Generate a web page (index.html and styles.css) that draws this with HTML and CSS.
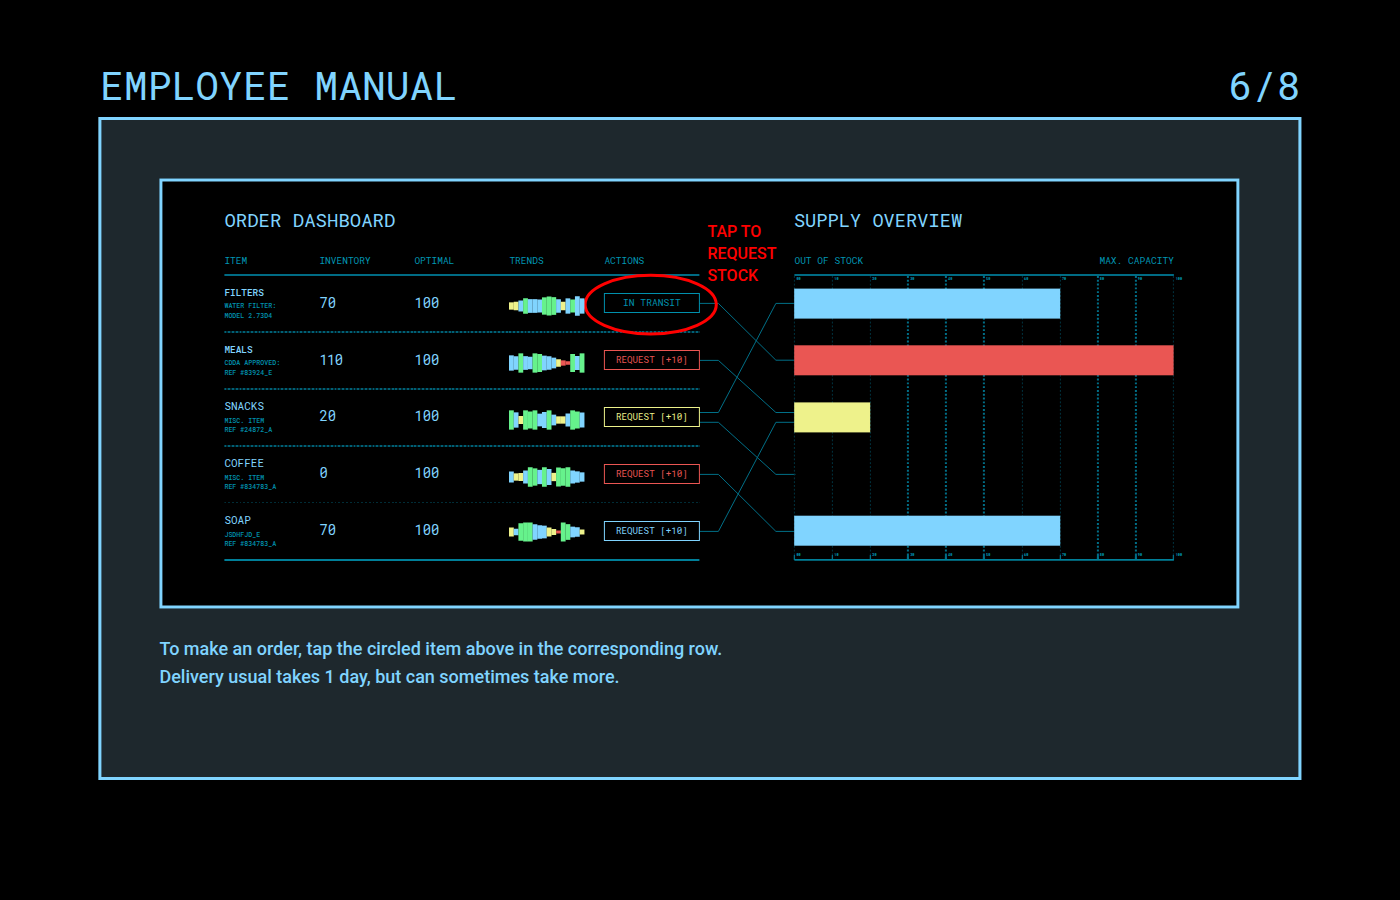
FILE: index.html
```
<!DOCTYPE html>
<html lang="en">
<head>
<meta charset="utf-8">
<title>Employee Manual</title>
<link rel="stylesheet" href="styles.css">
</head>
<body>
<main class="page">
  <header class="page-head"><h1>EMPLOYEE MANUAL</h1><span>6/8</span></header>
  <section class="panel">
    <div class="screen">
      <div class="board">
        <section class="orders">
          <h2>ORDER DASHBOARD</h2>
          <div class="cols labels"><span>ITEM</span><span>INVENTORY</span><span>OPTIMAL</span><span>TRENDS</span><span>ACTIONS</span></div>
          <div class="rows" id="rows"></div>
        </section>
        <div class="links">
          <p class="hint">TAP TO<br>REQUEST<br>STOCK</p>
          <svg class="wires" width="95" height="288" viewBox="699.5 274 95 288">
            <g fill="none" stroke="#006f87" stroke-width="1">
              <path d="M699.5 303.4H718.5L776 360.2H795"/>
              <path d="M699.5 360.4H718.5L776 412.5H795"/>
              <path d="M699.5 412.5H718.5L776 303.4H795"/>
              <path d="M699.5 422.3H718.5L776 474.4H795.5"/>
              <path d="M699.5 474.4H718.5L776 531.4H795"/>
              <path d="M699.5 531.4H718.5L776 422.3H795"/>
            </g>
            <ellipse cx="650.8" cy="304.6" rx="65.6" ry="29.4" fill="none" stroke="#f00" stroke-width="3"/>
          </svg>
        </div>
        <section class="supply">
          <h2>SUPPLY OVERVIEW</h2>
          <div class="labels ends"><span>OUT OF STOCK</span><span>MAX. CAPACITY</span></div>
          <svg class="chart" id="chart" width="380" height="288" viewBox="794.5 274 380 288"></svg>
        </section>
      </div>
    </div>
    <p class="copy">To make an order, tap the circled item above in the corresponding row.<br>Delivery usual takes 1 day, but can sometimes take more.</p>
  </section>
</main>
<script src="app.js"></script>
</body>
</html>
```
FILE: styles.css
```
* { box-sizing: border-box; }
body { margin: 0; background: #000; color: #80d4ff; font-family: Roboto, "Liberation Sans", sans-serif; }
h1, h2, p { margin: 0; font-weight: 400; }
.page { width: 1400px; height: 900px; padding: 61px 98px 0; overflow: hidden; }
.page-head, h2, .labels, .rows, .chart { font-family: "Roboto Mono", "DejaVu Sans Mono", monospace; }
.page-head { display: flex; justify-content: space-between; height: 56px; padding: 0 2px 0 2px; font-size: 39.7px; line-height: 48px; }
.page-head h1 { font-size: inherit; }
.panel { width: 1203px; height: 663px; padding: 58px 58px 0; border: 3px solid #80d4ff; background: #1e282d; transform: translateX(.4px); }
.screen { width: 1080px; height: 430px; border: 3px solid #80d4ff; background: #000; transform: translateY(.5px); }
.board { display: grid; grid-template-columns: 475px 95px 380px; padding: 27px 0 0 62px; transform: translateY(-.5px); }
h2 { height: 24px; font-size: 19px; line-height: 24px; white-space: nowrap; }
.supply h2 { margin-left: -.5px; font-size: 18.7px; }
.labels { height: 42px; padding-top: 21px; font-size: 9.5px; line-height: 16px; color: #0096b4; white-space: nowrap; }
.cols { display: grid; grid-template-columns: repeat(5, 95px); }
.ends { display: flex; justify-content: space-between; padding-right: .5px; font-size: 9.55px; }
.rows { border-bottom: 2px solid #007f99; }
.row { height: 57px; padding-top: 2px; background: repeating-linear-gradient(90deg, #006075 0 1.9px, #002832 1.9px 3.8px) 0 0 / 100% 2px no-repeat; }
.row.first { background-image: linear-gradient(#006b84, #006b84); }
.row.faint { background-size: 100% 1px; background-image: repeating-linear-gradient(90deg, #002c36 0 1.9px, #000 1.9px 3.8px); }
.item { padding-top: 10px; }
.name { height: 14px; font-size: 9.4px; font-weight: 500; line-height: 14px; }
.large .name { margin-top: -1px; font-size: 11px; font-weight: 400; }
.detail { padding-top: 1px; font-size: 6.65px; font-weight: 500; line-height: 10px; color: #0090ad; white-space: nowrap; }
.large .detail { padding-top: 3px; line-height: 9px; }
.value { padding-top: 17px; font-size: 13.8px; line-height: 20px; }
.large .value { padding-top: 16px; }
.value.tight { letter-spacing: -.6px; }
.trend { display: block; width: 76px; height: 22px; margin: 19px 0 0; transform: translateX(-.4px); }
.large .trend { margin-top: 18.5px; }
.faint .trend { margin-top: 17px; }
.action { width: 96px; height: 20px; margin: 17px 0 0 0; border: 1px solid currentColor; font-size: 9.2px; line-height: 16px; text-align: center; white-space: nowrap; transform: translateX(-.5px); }
.red { color: #ea5653; }
.yellow { color: #edf28b; }
.transit { color: #0090ad; font-size: 9.6px; line-height: 18px; }
.hint { height: 66px; margin: 13px 0 -13px 8px; color: #f00; font-size: 16px; font-weight: 500; line-height: 22px; white-space: nowrap; }
.wires { display: block; overflow: visible; }
.chart { display: block; overflow: visible; }
.tick { fill: #00a0be; font-size: 3.6px; font-weight: 700; }
.copy { padding-top: 27px; font-size: 18px; font-weight: 500; line-height: 28px; }
```
FILE: app.js
```
const colors = { B: '#80d4ff', G: '#66f28c', Y: '#eef28b', R: '#ea5653' };
const items = [
  ['FILTERS', 'WATER FILTER:', 'MODEL 2.73D4', 70, 'IN TRANSIT', 'transit', 'Y7.3 Y8.5 B11 G15.5 B13.7 B13.7 B13 G17.3 G19 G17.7 B13.5 Y8.5 B15.3 G13 B19.5 B15.3'],
  ['MEALS', 'CDDA APPROVED:', 'REF #83924_E', 110, 'REQUEST [+10]', 'red', 'B15.3 B13.5 G19.3 B13.7 B12.5 G19.3 G18 B14.7 B13.5 B10.7 Y7.5 R5.3 R3.5 G18 B14 G19.3'],
  ['SNACKS', 'MISC. ITEM', 'REF #24872_A', 20, 'REQUEST [+10]', 'yellow', 'G19.3 B15.3 Y8 G19.3 G17 G19.3 B12.7 B16 G19.3 B10.7 Y7.3 Y7.3 B13 G19.3 G17 B15'],
  ['COFFEE', 'MISC. ITEM', 'REF #834783_A', 0, 'REQUEST [+10]', 'red', 'B11 Y7.3 Y8 B13 G19.5 G17.3 B14.3 G19.5 B16 Y8.3 G19 G17.5 G19.5 B13 B11.3 B9.3'],
  ['SOAP', 'JSDHFJD_E', 'REF #834783_A', 70, 'REQUEST [+10]', 'blue', 'Y9 B6.5 G17.5 G19 G19 B15.5 B13.5 B12.7 Y9 Y6 R3 G19 G15.7 B10.7 B9.5 Y5']
];

// Each trend is a run of bars mirrored around its centre line.
const trend = (data) => data.split(' ').map((bar, i) => {
  const h = +bar.slice(1);
  return `<rect x="${(i * 4.71).toFixed(2)}" y="${11 - h / 2}" width="4.8" height="${h}" fill="${colors[bar[0]]}"/>`;
}).join('');

document.getElementById('rows').innerHTML = items.map(([name, a, b, stock, action, tone, data], i) =>
  `<div class="row cols${i === 0 ? ' first' : ''}${i > 1 ? ' large' : ''}${i === 4 ? ' faint' : ''}">
    <div class="item"><div class="name">${name}</div><div class="detail">${a}<br>${b}</div></div>
    <div class="value${stock > 100 ? ' tight' : ''}">${stock}</div><div class="value">100</div>
    <svg class="trend" viewBox="0 0 76 22">${trend(data)}</svg>
    <div class="action ${tone}">${action}</div>
  </div>`).join('');

let chart = '';
for (let i = 0; i <= 10; i++) {
  const x = 794.5 + i * 37.93;
  const strong = [3, 4, 5, 8, 9].includes(i);
  const gx = strong ? Math.round(x) : Math.floor(x) + .5;
  chart += `<path d="M${gx} 276V560" stroke="${strong ? '#006e87' : '#003440'}" stroke-width="${strong ? 2 : 1}" stroke-dasharray="1.9 1.9"/>`;
  chart += `<path d="M${gx} 555V560" stroke="#006e87" stroke-width="${strong ? 2 : 1.3}"/>`;
  const label = i === 0 ? '00' : i * 10;
  chart += `<text class="tick" x="${x + 2}" y="280">${label}</text><text class="tick" x="${x + 2}" y="556">${label}</text>`;
}
chart += '<path d="M794.5 275H1174" stroke="#006b84" stroke-width="2"/><path d="M794.5 559.9H1174" stroke="#007f99" stroke-width="1.6"/>';
[[288.6, 266, 'B'], [345.3, 379.4, 'R'], [402.4, 76, 'Y'], [515.7, 266, 'B']].forEach(([y, w, c]) => {
  chart += `<rect x="794.3" y="${y}" width="${w}" height="30" fill="${colors[c]}"/>`;
});
document.getElementById('chart').innerHTML = chart;
```
